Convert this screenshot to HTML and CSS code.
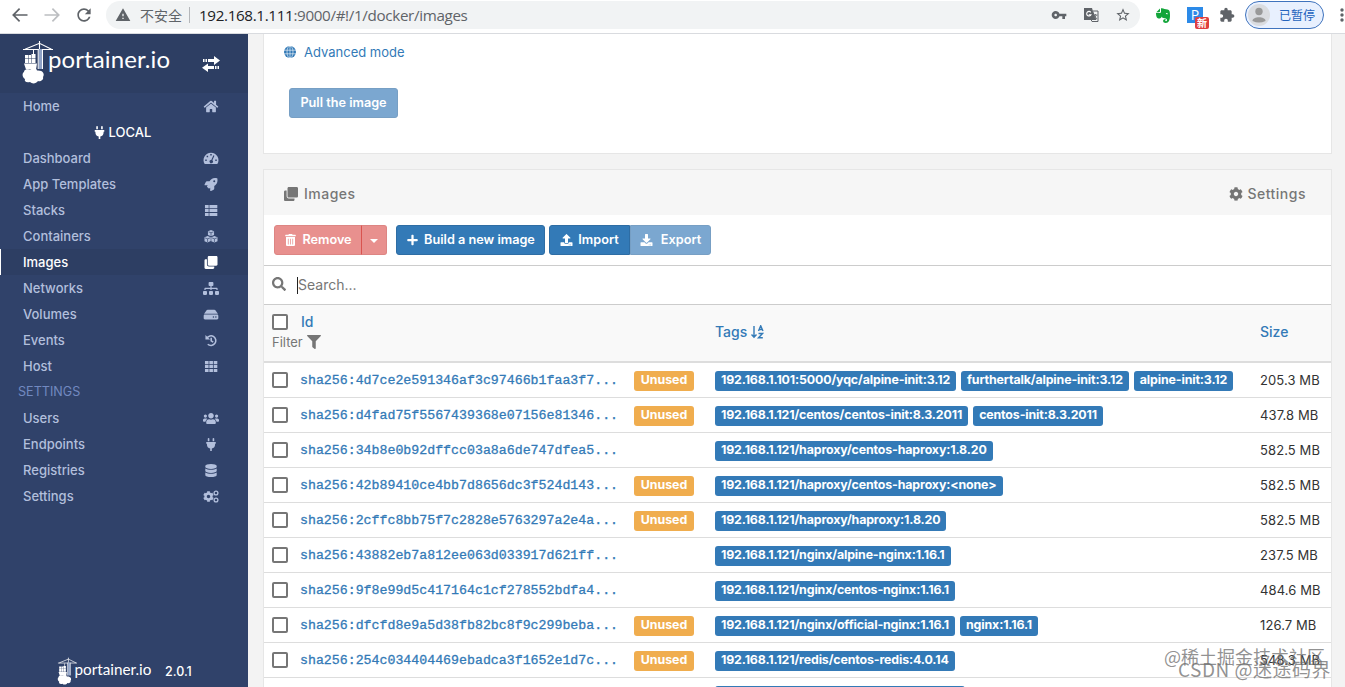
FILE: index.html
```
<!DOCTYPE html>
<html lang="en">
  <head>
    <meta charset="UTF-8" />
    <title>Portainer</title>
    <link rel="stylesheet" href="styles.css">
  </head>
  <body>
    <svg class="sprite">
      <symbol id="clone" viewBox="0 0 512 512"><path d="M464 0c26.51 0 48 21.49 48 48v288c0 26.51-21.49 48-48 48H176c-26.51 0-48-21.49-48-48V48c0-26.51 21.49-48 48-48h288M176 416c-44.112 0-80-35.888-80-80V128H48c-26.51 0-48 21.49-48 48v288c0 26.51 21.49 48 48 48h288c26.51 0 48-21.49 48-48v-48H176z"/></symbol>
      <symbol id="plug" viewBox="0 0 384 512"><path d="M320 32a32 32 0 0 0-64 0v96h64zm48 128H16A16 16 0 0 0 0 176v32a16 16 0 0 0 16 16h16v32a160.07 160.07 0 0 0 128 156.8V512h64v-99.2A160.07 160.07 0 0 0 352 256v-32h16a16 16 0 0 0 16-16v-32a16 16 0 0 0-16-16zM128 32a32 32 0 0 0-64 0v96h64z"/></symbol>
      <symbol id="cog" viewBox="0 0 512 512"><path d="M487.4 315.7l-42.6-24.6c4.3-23.2 4.3-47 0-70.2l42.6-24.6c4.9-2.8 7.1-8.6 5.5-14-11.1-35.6-30-67.8-54.7-94.6-3.8-4.1-10-5.1-14.8-2.3L380.8 110c-17.9-15.4-38.5-27.3-60.8-35.1V25.8c0-5.6-3.9-10.5-9.4-11.7-36.7-8.2-74.3-7.8-109.2 0-5.5 1.2-9.4 6.1-9.4 11.7V75c-22.2 7.9-42.8 19.8-60.8 35.1L88.7 85.5c-4.9-2.8-11-1.9-14.8 2.3-24.7 26.7-43.6 58.9-54.7 94.6-1.7 5.4.6 11.2 5.5 14L67.3 221c-4.3 23.2-4.3 47 0 70.2l-42.6 24.6c-4.9 2.8-7.1 8.6-5.5 14 11.1 35.6 30 67.8 54.7 94.6 3.8 4.1 10 5.1 14.8 2.3l42.6-24.6c17.9 15.4 38.5 27.3 60.8 35.1v49.2c0 5.6 3.9 10.5 9.4 11.7 36.7 8.2 74.3 7.8 109.2 0 5.5-1.2 9.4-6.1 9.4-11.7v-49.2c22.2-7.9 42.8-19.8 60.8-35.1l42.6 24.6c4.9 2.8 11 1.9 14.8-2.3 24.7-26.7 43.6-58.9 54.7-94.6 1.5-5.5-.7-11.3-5.6-14.1zM256 336c-44.1 0-80-35.9-80-80s35.9-80 80-80 80 35.9 80 80-35.9 80-80 80z"/></symbol>
      <symbol id="crane" viewBox="0 0 32 44">
        <path d="M1 9.5h30M17.500 1v8M3 9.300l14.500-6 12 6" fill="none" stroke="#fff" stroke-width="1.100"/>
        <path d="M16.500 9h4v20h-4z" fill="#8fa2c6"/>
        <path d="M16.200 9v20M20.500 9v20M11.500 10v4" fill="none" stroke="#fff" stroke-width="1"/>
        <path d="M9.500 14h4v4.500h-4zM3 15h3v3.500H3zM6.500 15h2.500v3.500H6.500zM3 19h3v4H3zM6.500 19H9v4H6.500zM9.500 19h4v4h-4zM2 23.500h13l-1 6H4z"/>
        <path d="M2 32c0-3 4-3.500 6-2 3-3 7-2 7 .5 6-.5 8 3.500 6 6.500 1 3-3 5-5 4-2 3-6 3-8 1-4 1-6-1-5-3-3-2-3-6-1-7z"/>
      </symbol>
    </svg>

    <div class="browser">
      <svg class="nav-icon" viewBox="0 0 24 24"><path d="M21 11H6.330l5.890-5.890L10.800 3.700 2.500 12l8.300 8.300 1.410-1.410L6.330 13H21v-2z"/></svg>
      <svg class="nav-icon forward" viewBox="0 0 24 24"><path d="M21 11H6.330l5.890-5.890L10.800 3.700 2.500 12l8.300 8.300 1.410-1.410L6.330 13H21v-2z"/></svg>
      <svg class="nav-icon" viewBox="0 0 24 24"><path d="M17.650 6.350C16.200 4.900 14.210 4 12 4c-4.420 0-7.990 3.580-7.990 8s3.570 8 7.990 8c3.730 0 6.840-2.550 7.730-6h-2.080c-.82 2.330-3.040 4-5.650 4-3.310 0-6-2.690-6-6s2.690-6 6-6c1.660 0 3.140.69 4.220 1.780L13 11h7V4l-2.350 2.350z"/></svg>
      <div class="address">
        <svg class="warn" viewBox="0 0 24 24"><path d="M1 21h22L12 2 1 21zm12-3h-2v-2h2v2zm0-4h-2v-4h2v4z"/></svg>
        <span class="insecure">不安全</span>
        <span class="url"><b>192.168.1.111</b>:9000/#!/1/docker/images</span>
        <svg class="tool" viewBox="0 0 24 24"><path d="M12.650 10C11.830 7.670 9.610 6 7 6c-3.310 0-6 2.690-6 6s2.690 6 6 6c2.610 0 4.830-1.670 5.650-4H17v4h4v-4h2v-4H12.650zM7 14c-1.100 0-2-.9-2-2s.9-2 2-2 2 .9 2 2-.9 2-2 2z"/></svg>
        <svg class="tool" viewBox="0 0 16 16"><path d="M1 1h8l3.500 12H1z"/><path d="M9.500 4h5.500v10.500H9l-1-2h5z" fill="#f1f3f4" stroke="#5f6368"/><path d="M7.800 5.300a2.300 2.300 0 1 0 .2 2.500H5.800" fill="none" stroke="#fff" stroke-width="1.100"/><path d="M10.500 8h4M12.500 7v1.200M13.500 8l-3 4M11.500 9l2.500 3" stroke="#5f6368" fill="none" stroke-width=".8"/></svg>
        <svg class="tool" viewBox="0 0 24 24"><path d="M22 9.240l-7.190-.62L12 2 9.190 8.630 2 9.240l5.460 4.730L5.820 21 12 17.270 18.180 21l-1.630-7.030L22 9.240zM12 15.400l-3.760 2.270 1-4.280-3.320-2.880 4.380-.38L12 6.100l1.710 4.040 4.380.38-3.320 2.880 1 4.280L12 15.400z"/></svg>
      </div>
      <svg class="evernote" viewBox="0 0 16 16"><path d="M5 1.500 1.300 5.300H4q1 0 1-1zM6 1.200v3.600Q6 6 4.800 6H1c0 3 .8 5.500 2.500 5.500 2 0 3-.6 3-2 .5 1.200 1.500 1.700 3 1.700 2 0 2.800 1 2.500 2.300-.3.900-1.800.9-1.800 0 0-.6.300-.8.900-.8-1.500-.9-3-.2-3 1.200 0 1.300 1 2 2.700 2 3 0 4.200-3 4.200-7.500C15 4 14.500 3 12.500 2.500L9.500 2C8.500 1.200 7 1 6 1.200z"/><path d="M10.800 7c.2-1.400 1.800-1.400 2 .2z" fill="#fff"/></svg>
      <div class="p-ext">P<span class="new">新</span></div>
      <svg class="tool puzzle" viewBox="0 0 24 24"><path d="M20.500 11H19V7c0-1.100-.9-2-2-2h-4V3.500C13 2.120 11.880 1 10.500 1S8 2.120 8 3.500V5H4c-1.100 0-1.990.9-1.990 2v3.800H3.500c1.490 0 2.700 1.210 2.700 2.700s-1.210 2.700-2.700 2.700H2V20c0 1.100.9 2 2 2h3.800v-1.500c0-1.490 1.210-2.700 2.700-2.700 1.490 0 2.700 1.210 2.700 2.700V22H17c1.100 0 2-.9 2-2v-4h1.500c1.380 0 2.500-1.120 2.500-2.500S21.880 11 20.500 11z"/></svg>
      <div class="profile">
        <svg viewBox="0 0 22 22"><circle cx="11" cy="11" r="11" fill="#dadce0"/><circle cx="11" cy="7.500" r="3.700"/><path d="M4.500 17c0-5 13-5 13 0q-6.500 3-13 0z"/></svg>
        已暂停
      </div>
      <svg class="dots" viewBox="0 0 4 16"><circle cx="2" cy="3" r="1.700"/><circle cx="2" cy="8" r="1.700"/><circle cx="2" cy="13" r="1.700"/></svg>
    </div>

    <div class="app">
      <div class="sidebar">
        <div class="sidebar-header">
          <svg class="logo" viewBox="0 0 150 44"><use href="#crane" width="32" height="44"/><text x="26" y="28" textLength="122" lengthAdjust="spacing">portainer.io</text></svg>
          <svg class="toggle" viewBox="0 0 18 16"><path d="M6 3h6V0l6 4.500L12 9V6H6zM1 3h1.500v3H1zM3.500 3H5v3H3.500zM12 10H6V7.500L0 11.700 6 16v-3h6zM13 10h1.500v3H13zM15.500 10H17v3h-1.500z"/></svg>
        </div>
        <div class="item">Home
          <svg viewBox="0 0 576 512"><path d="M280.370 148.260L96 300.110V464a16 16 0 0 0 16 16l112.060-.29a16 16 0 0 0 15.920-16V368a16 16 0 0 1 16-16h64a16 16 0 0 1 16 16v95.640a16 16 0 0 0 16 16.050L464 480a16 16 0 0 0 16-16V300L295.670 148.260a12.190 12.190 0 0 0-15.300 0zM571.600 251.470L488 182.560V44.050a12 12 0 0 0-12-12h-56a12 12 0 0 0-12 12v72.610L318.470 43a48 48 0 0 0-61 0L4.340 251.470a12 12 0 0 0-1.600 16.900l25.500 31A12 12 0 0 0 45.150 301l235.220-193.740a12.190 12.190 0 0 1 15.300 0L530.900 301a12 12 0 0 0 16.900-1.600l25.500-31a12 12 0 0 0-1.700-16.930z"/></svg>
        </div>
        <div class="endpoint"><svg><use href="#plug"/></svg>LOCAL</div>
        <div class="item">Dashboard
          <svg viewBox="0 0 16 14"><path fill-rule="evenodd" d="M8 .8a8 8 0 0 1 6.800 12.200H1.200A8 8 0 0 1 8 .8zM7.200 2.200v1.600h1.600V2.200zM3.300 4v1.600h1.600V4zM1.800 8v1.600h1.600V8zM12.600 8v1.600h1.600V8zM10.600 3.600 8.300 8.500a1.800 1.800 0 1 0 1.200.5l2.200-4.900z"/></svg>
        </div>
        <div class="item">App Templates
          <svg viewBox="0 0 512 512"><path d="M505.120 19.094c-1.190-5.530-6.660-11-12.207-12.187C460.716 0 435.507 0 410.407 0 307.175 0 245.270 55.203 199.052 128H94.838c-16.348.016-35.557 11.875-42.887 26.484L2.516 253.297A28.400 28.400 0 0 0 0 264a24.008 24.008 0 0 0 24.006 24h103.844l-22.473 22.469c-11.368 11.365-12.800 32.252 0 45.063l51.220 51.210c11.242 11.240 32.150 12.870 45.090 0l22.470-22.460V488a24.008 24.008 0 0 0 24 24 28.560 28.560 0 0 0 10.710-2.520l98.730-49.390c14.650-7.300 26.500-26.500 26.500-42.860V312.800c72.590-46.300 128.030-108.400 128.030-211.100.1-25.200.1-50.400-6.800-82.600zM384 168a40 40 0 1 1 40-40 40 40 0 0 1-40 40z"/></svg>
        </div>
        <div class="item">Stacks
          <svg viewBox="0 0 16 14"><path d="M1.500 1.200h4v3.300h-4zM6.300 1.200h8.500v3.300H6.300zM1.500 5.400h4v3.300h-4zM6.300 5.400h8.500v3.300H6.300zM1.500 9.600h4v3.300h-4zM6.300 9.600h8.500v3.300H6.300z"/></svg>
        </div>
        <div class="item">Containers
          <svg viewBox="0 0 16 14"><path d="M8 0l3.300 1.300v4L8 6.800 4.700 5.300v-4zM4.300 6.500l3.400 1.400v4L4.300 13.500 1 12V7.900zM11.700 6.500 15 7.900V12l-3.300 1.500L8.300 12V7.900z"/><path d="M5.300 2 8 3l2.700-1M8 3v3.300M1.600 8.500l2.700 1 2.700-1M4.300 9.500V13M9 8.500l2.700 1 2.700-1M11.700 9.500V13" fill="none" stroke="#30426a" stroke-width=".7"/></svg>
        </div>
        <div class="item active">Images <svg><use href="#clone"/></svg></div>
        <div class="item">Networks
          <svg viewBox="0 0 640 512"><path d="M128 352H32c-17.670 0-32 14.330-32 32v96c0 17.670 14.330 32 32 32h96c17.670 0 32-14.330 32-32v-96c0-17.670-14.330-32-32-32zm-24-80h192v48h48v-48h192v48h48v-57.590c0-21.170-17.230-38.410-38.410-38.410H344v-64h40c17.670 0 32-14.330 32-32V32c0-17.670-14.330-32-32-32H256c-17.670 0-32 14.330-32 32v96c0 17.670 14.330 32 32 32h40v64H94.410C73.230 224 56 241.230 56 262.410V320h48v-48zm264 80h-96c-17.670 0-32 14.330-32 32v96c0 17.670 14.330 32 32 32h96c17.670 0 32-14.330 32-32v-96c0-17.670-14.330-32-32-32zm240 0h-96c-17.670 0-32 14.330-32 32v96c0 17.670 14.330 32 32 32h96c17.670 0 32-14.330 32-32v-96c0-17.670-14.330-32-32-32z"/></svg>
        </div>
        <div class="item">Volumes
          <svg viewBox="0 0 576 512"><path d="M576 304v96c0 26.510-21.490 48-48 48H48c-26.510 0-48-21.490-48-48v-96c0-26.510 21.490-48 48-48h480c26.510 0 48 21.490 48 48zm-48-80a79.557 79.557 0 0 1 30.777 6.165L462.250 85.374A48.003 48.003 0 0 0 422.311 64H153.689a48 48 0 0 0-39.938 21.374L17.223 230.165A79.557 79.557 0 0 1 48 224h480zm-48 96c-17.673 0-32 14.327-32 32s14.327 32 32 32 32-14.327 32-32-14.327-32-32-32zm-96 0c-17.673 0-32 14.327-32 32s14.327 32 32 32 32-14.327 32-32-14.327-32-32-32z"/></svg>
        </div>
        <div class="item">Events
          <svg viewBox="0 0 16 14"><path d="M3.500 4.500A5.200 5.200 0 1 1 4.500 11M8.200 4v3.300l2.200 1.500" fill="none" stroke="#b2bfdc" stroke-width="1.700"/><path d="M2 1v5h5z"/></svg>
        </div>
        <div class="item">Host
          <svg viewBox="0 0 16 14"><path d="M1.500 1.200h3.900v3.300H1.500zM6.200 1.200h3.900v3.300H6.200zM10.900 1.200h3.900v3.300h-3.900zM1.500 5.400h3.900v3.300H1.500zM6.200 5.400h3.900v3.300H6.200zM10.900 5.400h3.900v3.300h-3.900zM1.500 9.600h3.900v3.300H1.500zM6.200 9.600h3.900v3.300H6.200zM10.900 9.600h3.900v3.300h-3.900z"/></svg>
        </div>
        <div class="section">SETTINGS</div>
        <div class="item">Users
          <svg viewBox="0 0 640 512"><path d="M96 224c35.300 0 64-28.700 64-64s-28.700-64-64-64-64 28.700-64 64 28.700 64 64 64zm448 0c35.300 0 64-28.700 64-64s-28.700-64-64-64-64 28.700-64 64 28.700 64 64 64zm32 32h-64c-17.600 0-33.500 7.100-45.100 18.600 40.300 22.100 68.900 62 75.100 109.400h66c17.700 0 32-14.300 32-32v-32c0-35.300-28.700-64-64-64zm-256 0c61.900 0 112-50.100 112-112S381.900 32 320 32 208 82.100 208 144s50.100 112 112 112zm76.800 32h-8.300c-20.800 10-43.900 16-68.500 16s-47.600-6-68.500-16h-8.300C179.600 288 128 339.600 128 403.200V432c0 26.500 21.500 48 48 48h288c26.500 0 48-21.500 48-48v-28.800c0-63.600-51.600-115.200-115.200-115.200zm-223.700-13.400C161.500 263.100 145.600 256 128 256H64c-35.300 0-64 28.700-64 64v32c0 17.700 14.300 32 32 32h65.900c6.300-47.400 34.900-87.300 75.200-109.400z"/></svg>
        </div>
        <div class="item">Endpoints <svg><use href="#plug"/></svg></div>
        <div class="item">Registries
          <svg viewBox="0 0 448 512"><path d="M448 73.143v45.714C448 159.143 347.667 192 224 192S0 159.143 0 118.857V73.143C0 32.857 100.333 0 224 0s224 32.857 224 73.143zM448 176v102.857C448 319.143 347.667 352 224 352S0 319.143 0 278.857V176c48.125 33.143 136.208 48.572 224 48.572S399.874 209.143 448 176zm0 160v102.857C448 479.143 347.667 512 224 512S0 479.143 0 438.857V336c48.125 33.143 136.208 48.572 224 48.572S399.874 369.143 448 336z"/></svg>
        </div>
        <div class="item">Settings
          <svg viewBox="0 0 16 13"><use href="#cog" x="0" y="1" width="11" height="11"/><g fill="none" stroke="#b2bfdc" stroke-width="1.300"><circle cx="13" cy="3" r="1.900"/><circle cx="13" cy="10" r="1.900"/></g></svg>
        </div>
        <div class="sidebar-footer">
          <svg class="logo-small" viewBox="0 0 150 44"><use href="#crane" width="32" height="44"/><text x="27" y="28" textLength="121" lengthAdjust="spacing">portainer.io</text></svg>
          2.0.1
        </div>
      </div>

      <div class="content">
        <div class="panel pull">
          <a class="advanced"><svg viewBox="0 0 12 12"><circle cx="6" cy="6" r="6"/><path d="M0 4.200h12M0 7.800h12M6 0v12" stroke="#fff" stroke-width=".6"/><ellipse cx="6" cy="6" rx="3" ry="6" fill="none" stroke="#fff" stroke-width=".6"/></svg>Advanced mode</a>
          <div class="btn disabled pull-btn">Pull the image</div>
        </div>

        <div class="panel images">
          <div class="panel-title">
            <svg><use href="#clone"/></svg>Images
            <span class="settings"><svg><use href="#cog"/></svg>Settings</span>
          </div>
          <div class="toolbar">
            <div class="btn danger remove"><svg viewBox="0 0 448 512"><path d="M32 464a48 48 0 0 0 48 48h288a48 48 0 0 0 48-48V128H32zm272-256a16 16 0 0 1 32 0v224a16 16 0 0 1-32 0zm-96 0a16 16 0 0 1 32 0v224a16 16 0 0 1-32 0zm-96 0a16 16 0 0 1 32 0v224a16 16 0 0 1-32 0zM432 32H312l-9.400-18.700A24 24 0 0 0 281.100 0H166.800a23.720 23.720 0 0 0-21.400 13.300L136 32H16A16 16 0 0 0 0 48v32a16 16 0 0 0 16 16h416a16 16 0 0 0 16-16V48a16 16 0 0 0-16-16z"/></svg>Remove</div>
            <div class="btn danger caret-btn"><span class="caret"></span></div>
            <div class="btn build"><svg viewBox="0 0 448 512"><path d="M416 208H272V64c0-17.670-14.330-32-32-32h-32c-17.670 0-32 14.330-32 32v144H32c-17.670 0-32 14.330-32 32v32c0 17.670 14.330 32 32 32h144v144c0 17.670 14.330 32 32 32h32c17.670 0 32-14.330 32-32V304h144c17.670 0 32-14.330 32-32v-32c0-17.670-14.330-32-32-32z"/></svg>Build a new image</div>
            <div class="btn import"><svg viewBox="0 0 512 512"><path d="M296 384h-80c-13.300 0-24-10.700-24-24V192h-87.700c-17.800 0-26.700-21.500-14.100-34.100L242.300 5.700c7.500-7.500 19.800-7.500 27.300 0l152.200 152.200c12.600 12.600 3.700 34.100-14.100 34.100H320v168c0 13.300-10.700 24-24 24zm216-8v112c0 13.300-10.700 24-24 24H24c-13.300 0-24-10.700-24-24V376c0-13.300 10.700-24 24-24h136v8c0 30.900 25.100 56 56 56h80c30.900 0 56-25.100 56-56v-8h136c13.300 0 24 10.700 24 24zm-124 88c0-11-9-20-20-20s-20 9-20 20 9 20 20 20 20-9 20-20zm64 0c0-11-9-20-20-20s-20 9-20 20 9 20 20 20 20-9 20-20z"/></svg>Import</div>
            <div class="btn disabled export"><svg viewBox="0 0 512 512"><path d="M216 0h80c13.300 0 24 10.700 24 24v168h87.700c17.800 0 26.700 21.500 14.100 34.100L269.700 378.300c-7.500 7.500-19.800 7.500-27.300 0L90.100 226.100c-12.600-12.600-3.700-34.100 14.100-34.100H192V24c0-13.300 10.700-24 24-24zm296 376v112c0 13.300-10.700 24-24 24H24c-13.300 0-24-10.700-24-24V376c0-13.300 10.700-24 24-24h146.700l49 49c20.100 20.100 52.500 20.100 72.600 0l49-49H488c13.300 0 24 10.700 24 24zm-124 88c0-11-9-20-20-20s-20 9-20 20 9 20 20 20 20-9 20-20zm64 0c0-11-9-20-20-20s-20 9-20 20 9 20 20 20 20-9 20-20z"/></svg>Export</div>
          </div>
          <div class="search">
            <svg viewBox="0 0 512 512"><path d="M505 442.700L405.300 343c-4.500-4.500-10.600-7-17-7H372c27.600-35.300 44-79.700 44-128C416 93.100 322.900 0 208 0S0 93.100 0 208s93.100 208 208 208c48.300 0 92.700-16.400 128-44v16.300c0 6.400 2.500 12.500 7 17l99.700 99.700c9.400 9.400 24.600 9.400 33.900 0l28.300-28.300c9.400-9.400 9.400-24.600.1-34zM208 336c-70.700 0-128-57.200-128-128 0-70.700 57.200-128 128-128 70.700 0 128 57.200 128 128 0 70.700-57.200 128-128 128z"/></svg>
            <span class="cursor"></span>Search...
          </div>
          <div class="row head">
            <div class="head-id">
              <div class="head-line"><span class="check"></span>Id</div>
              <div class="filter">Filter<svg viewBox="0 0 512 512"><path d="M487.976 0H24.028C2.710 0-8.047 25.866 7.058 40.971L192 225.941V432c0 7.831 3.821 15.170 10.237 19.662l80 55.980C298.020 518.690 320 507.493 320 487.980V225.941l184.947-184.970C520.021 25.896 509.338 0 487.976 0z"/></svg></div>
            </div>
            <div class="head-tags">Tags<svg viewBox="0 0 13 14"><path d="M3 1v11M.5 9.500 3 12.300l2.500-2.800M7.500 6 9.700.8 12 6M8.300 4.500h3M7.500 8.500h4l-4 4.200h4.300" fill="none" stroke="#337ab7" stroke-width="1.400"/></svg></div>
            <div>Size</div>
          </div>
          <div class="row"><div class="id"><span class="check"></span><a>sha256:4d7ce2e591346af3c97466b1faa3f7...</a><span class="unused">Unused</span></div><div class="tags"><span>192.168.1.101:5000/yqc/alpine-init:3.12</span><span>furthertalk/alpine-init:3.12</span><span>alpine-init:3.12</span></div><div class="size">205.3 MB</div></div>
          <div class="row"><div class="id"><span class="check"></span><a>sha256:d4fad75f5567439368e07156e81346...</a><span class="unused">Unused</span></div><div class="tags"><span>192.168.1.121/centos/centos-init:8.3.2011</span><span>centos-init:8.3.2011</span></div><div class="size">437.8 MB</div></div>
          <div class="row"><div class="id"><span class="check"></span><a>sha256:34b8e0b92dffcc03a8a6de747dfea5...</a></div><div class="tags"><span>192.168.1.121/haproxy/centos-haproxy:1.8.20</span></div><div class="size">582.5 MB</div></div>
          <div class="row"><div class="id"><span class="check"></span><a>sha256:42b89410ce4bb7d8656dc3f524d143...</a><span class="unused">Unused</span></div><div class="tags"><span>192.168.1.121/haproxy/centos-haproxy:&lt;none&gt;</span></div><div class="size">582.5 MB</div></div>
          <div class="row"><div class="id"><span class="check"></span><a>sha256:2cffc8bb75f7c2828e5763297a2e4a...</a><span class="unused">Unused</span></div><div class="tags"><span>192.168.1.121/haproxy/haproxy:1.8.20</span></div><div class="size">582.5 MB</div></div>
          <div class="row"><div class="id"><span class="check"></span><a>sha256:43882eb7a812ee063d033917d621ff...</a></div><div class="tags"><span>192.168.1.121/nginx/alpine-nginx:1.16.1</span></div><div class="size">237.5 MB</div></div>
          <div class="row"><div class="id"><span class="check"></span><a>sha256:9f8e99d5c417164c1cf278552bdfa4...</a></div><div class="tags"><span>192.168.1.121/nginx/centos-nginx:1.16.1</span></div><div class="size">484.6 MB</div></div>
          <div class="row"><div class="id"><span class="check"></span><a>sha256:dfcfd8e9a5d38fb82bc8f9c299beba...</a><span class="unused">Unused</span></div><div class="tags"><span>192.168.1.121/nginx/official-nginx:1.16.1</span><span>nginx:1.16.1</span></div><div class="size">126.7 MB</div></div>
          <div class="row"><div class="id"><span class="check"></span><a>sha256:254c034404469ebadca3f1652e1d7c...</a><span class="unused">Unused</span></div><div class="tags"><span>192.168.1.121/redis/centos-redis:4.0.14</span></div><div class="size">548.3 MB</div></div>
          <div class="row"><div class="id"></div><div class="tags"><span class="cut"></span></div></div>
        </div>
      </div>
    </div>
    <div class="watermark juejin">@稀土掘金技术社区</div>
    <div class="watermark csdn">CSDN @迷途码界</div>
  </body>
</html>
```
FILE: styles.css
```
* {
  box-sizing: border-box;
}

body {
  margin: 0;
  height: 687px;
  display: flex;
  flex-direction: column;
  overflow: hidden;
  background: #f3f3f3;
  color: #767676;
  font-family: Inter, "Noto Sans CJK SC", sans-serif;
  font-size: 13px;
}

svg {
  display: block;
  flex: none;
  fill: currentColor;
}

.sprite {
  position: absolute;
  width: 0;
  height: 0;
}

/* browser bar */
.browser {
  flex: none;
  display: flex;
  align-items: center;
  height: 34px;
  padding: 0 0 4px 10px;
  border-bottom: 1px solid #d9dbdf;
  background: #fff;
  color: #5f6368;
}

.nav-icon {
  width: 20px;
  height: 20px;
  margin-right: 12px;
}

.forward {
  transform: scaleX(-1);
  color: #bcbec1;
}

.address {
  display: flex;
  align-items: center;
  width: 1034px;
  height: 28px;
  padding: 0 9px;
  border-radius: 14px;
  background: #f1f3f4;
}

.warn {
  width: 16px;
  height: 16px;
}

.insecure {
  margin-left: 9px;
  padding-right: 7px;
  border-right: 1px solid #b5b7ba;
  font: 14px/16px "Noto Sans CJK SC", sans-serif;
}

.url {
  flex: 1;
  margin-left: 9px;
  font: 15.2px "Open Sans", sans-serif;
  letter-spacing: -.34px;
}

.url b {
  color: #202124;
  font-weight: 400;
}

.tool {
  width: 16px;
  height: 16px;
  margin-left: 16px;
}

.evernote {
  width: 16px;
  height: 16px;
  margin-left: 15px;
  color: #12a53a;
}

.p-ext {
  position: relative;
  width: 16px;
  height: 16px;
  margin-left: 16px;
  background: #2c8ae8;
  color: #fff;
  font: 14px/16px "Open Sans", sans-serif;
  text-align: center;
}

.new {
  position: absolute;
  left: 8px;
  top: 10px;
  width: 14px;
  height: 12px;
  border-radius: 2px;
  background: #df3f3f;
  font: bold 10px/12px "Noto Sans CJK SC", sans-serif;
}

.profile {
  display: flex;
  align-items: center;
  gap: 9px;
  width: 79px;
  height: 28px;
  margin: 0 16px 0 10px;
  padding-left: 2px;
  border: 1px solid #3f73bd;
  border-radius: 14px;
  background: #e8f0fe;
  color: #2463bd;
  font: 12px "Noto Sans CJK SC", sans-serif;
}

.puzzle {
  margin-left: 16px;
}

.profile svg {
  width: 22px;
  height: 22px;
  color: #999;
}

.dots {
  width: 4px;
  height: 16px;
}

/* sidebar */
.app {
  flex: 1;
  display: flex;
  min-height: 0;
}

.sidebar {
  flex: none;
  display: flex;
  flex-direction: column;
  width: 248px;
  background: #30426a;
  color: #b2bfdc;
  font-weight: 500;
}

.sidebar-header {
  display: flex;
  align-items: flex-start;
  height: 59px;
  padding: 6px 0 0 22px;
  background: #2d3e63;
  color: #fff;
}

.logo {
  width: 150px;
  height: 44px;
}

.logo text,
.logo-small text {
  font: 24px Lato, sans-serif;
}

.toggle {
  width: 18px;
  height: 16px;
  margin: 16px 0 0 30px;
}

.item {
  display: flex;
  align-items: center;
  justify-content: space-between;
  height: 26px;
  padding: 0 29px 0 23px;
}

.item svg {
  width: 16px;
  height: 13px;
}

.item.active {
  padding-left: 22px;
  border-left: 1px solid #fff;
  background: #2d3e63;
  color: #fff;
}

.endpoint {
  display: flex;
  align-items: center;
  justify-content: center;
  gap: 4px;
  height: 26px;
  padding-right: 3px;
  color: #fff;
}

.endpoint svg {
  width: 11px;
  height: 13px;
}

.section {
  height: 26px;
  padding-left: 18px;
  color: #7289c0;
  font-size: 12.6px;
  font-weight: 400;
  line-height: 26px;
}

.sidebar-footer {
  display: flex;
  align-items: center;
  gap: 12px;
  height: 32px;
  margin-top: auto;
  padding-left: 57px;
  color: #fff;
  font-size: 12.5px;
}

.logo-small {
  width: 96px;
  height: 28px;
}

/* content */
.content {
  flex: 1;
  min-width: 0;
  padding: 0 13px 0 15px;
}

.panel {
  border: 1px solid #e6e6e6;
  background: #fff;
}

.pull {
  height: 120px;
  padding: 10px 0 0 20px;
  border-top: 0;
}

.advanced {
  display: flex;
  align-items: center;
  gap: 8px;
  height: 16px;
  color: #337ab7;
}

.advanced svg {
  width: 12px;
  height: 12px;
}

.btn {
  display: flex;
  align-items: center;
  justify-content: center;
  gap: 5px;
  height: 30px;
  padding-bottom: 1px;
  border: 1px solid #2e6da4;
  border-radius: 3px;
  background: #337ab7;
  color: #fff;
  font-size: 12.7px;
  font-weight: 600;
  white-space: nowrap;
}

.btn svg {
  width: 13px;
  height: 12px;
}

.btn.disabled {
  border-color: #779fc4;
  background: #7ba7d0;
}

.pull-btn {
  width: 109px;
  margin: 28px 0 0 5px;
}

.images {
  margin-top: 15px;
}

.panel-title {
  display: flex;
  align-items: center;
  gap: 6px;
  height: 45px;
  padding: 2px 25px 0 20px;
  background: #f6f6f6;
  font-size: 14px;
  font-weight: 500;
  letter-spacing: .5px;
}

.panel-title svg {
  width: 14px;
  height: 14px;
}

.settings {
  display: flex;
  align-items: center;
  gap: 4px;
  margin-left: auto;
}

.toolbar {
  display: flex;
  height: 50px;
  padding: 10px;
}

.btn.danger {
  border-color: #dd8583;
  background: #e8908e;
}

.remove {
  width: 88px;
  border-radius: 3px 0 0 3px;
}

.caret-btn {
  width: 26px;
  margin: 0 9px 0 -1px;
  border-left-color: #d9534f !important;
  border-radius: 0 3px 3px 0;
}

.caret {
  margin-top: 2px;
  border: 4px solid transparent;
  border-top-color: #fff;
  border-bottom: 0;
}

.build {
  width: 149px;
  margin-right: 4px;
}

.import {
  width: 81px;
  border-radius: 3px 0 0 3px;
}

.export {
  width: 81px;
  gap: 8px;
  border-radius: 0 3px 3px 0;
}

.search {
  display: flex;
  align-items: center;
  height: 40px;
  padding: 0 0 2px 8px;
  border: solid #ccc;
  border-width: 1px 0;
  font-size: 14px;
}

.search svg {
  width: 14px;
  height: 14px;
}

.cursor {
  width: 1px;
  height: 17px;
  margin: 2px 0 0 11px;
  background: #222;
}

.row {
  display: grid;
  grid-template-columns: 451px 545px 1fr;
  align-items: center;
  height: 35px;
  border-bottom: 1px solid #ddd;
}

.row.head {
  height: 58px;
  padding-bottom: 3px;
  border-bottom: 2px solid #ddd;
  background: #f9f9f9;
  color: #337ab7;
  font-size: 14px;
  font-weight: 500;
}

.head-id {
  padding-left: 8px;
}

.head-line {
  display: flex;
  align-items: center;
  gap: 13px;
  height: 20px;
}

.filter {
  display: flex;
  align-items: center;
  gap: 4px;
  height: 20px;
  color: #767676;
  font-size: 13px;
  font-weight: 400;
}

.filter svg {
  width: 14px;
  height: 14px;
}

.head-tags {
  display: flex;
  align-items: center;
  gap: 4px;
}

.head-tags svg {
  width: 13px;
  height: 14px;
}

.check {
  flex: none;
  width: 16px;
  height: 16px;
  border: 2px solid #767676;
  border-radius: 2px;
  background: #fff;
}

.id {
  display: flex;
  align-items: center;
  padding-left: 8px;
}

.id a {
  width: 334px;
  margin-left: 12px;
  color: #337ab7;
  font: 13.25px "Liberation Mono", monospace;
  -webkit-text-stroke: .3px #337ab7;
}

.unused,
.tags span {
  height: 20px;
  border-radius: 3px;
  color: #fff;
  font-size: 12.4px;
  font-weight: 700;
  line-height: 18px;
  text-align: center;
}

.unused {
  width: 60px;
  margin-top: 2px;
  background: #f0ad4e;
}

.tags {
  display: flex;
  gap: 5px;
  padding-top: 2px;
}

.tags span {
  padding: 0 6px;
  background: #337ab7;
  letter-spacing: -.14px;
  white-space: nowrap;
}

.tags .cut {
  width: 250px;
}

.size {
  color: #333;
  letter-spacing: .1px;
}

/* page watermarks */
.watermark {
  position: absolute;
  color: rgba(110, 110, 110, .75);
  font-family: "Noto Sans CJK SC", sans-serif;
  white-space: nowrap;
}

.juejin {
  right: 20px;
  top: 643px;
  font-size: 18px;
  line-height: 26px;
}

.csdn {
  right: 14px;
  top: 656px;
  font-size: 19px;
  line-height: 26px;
  letter-spacing: .5px;
}
```
